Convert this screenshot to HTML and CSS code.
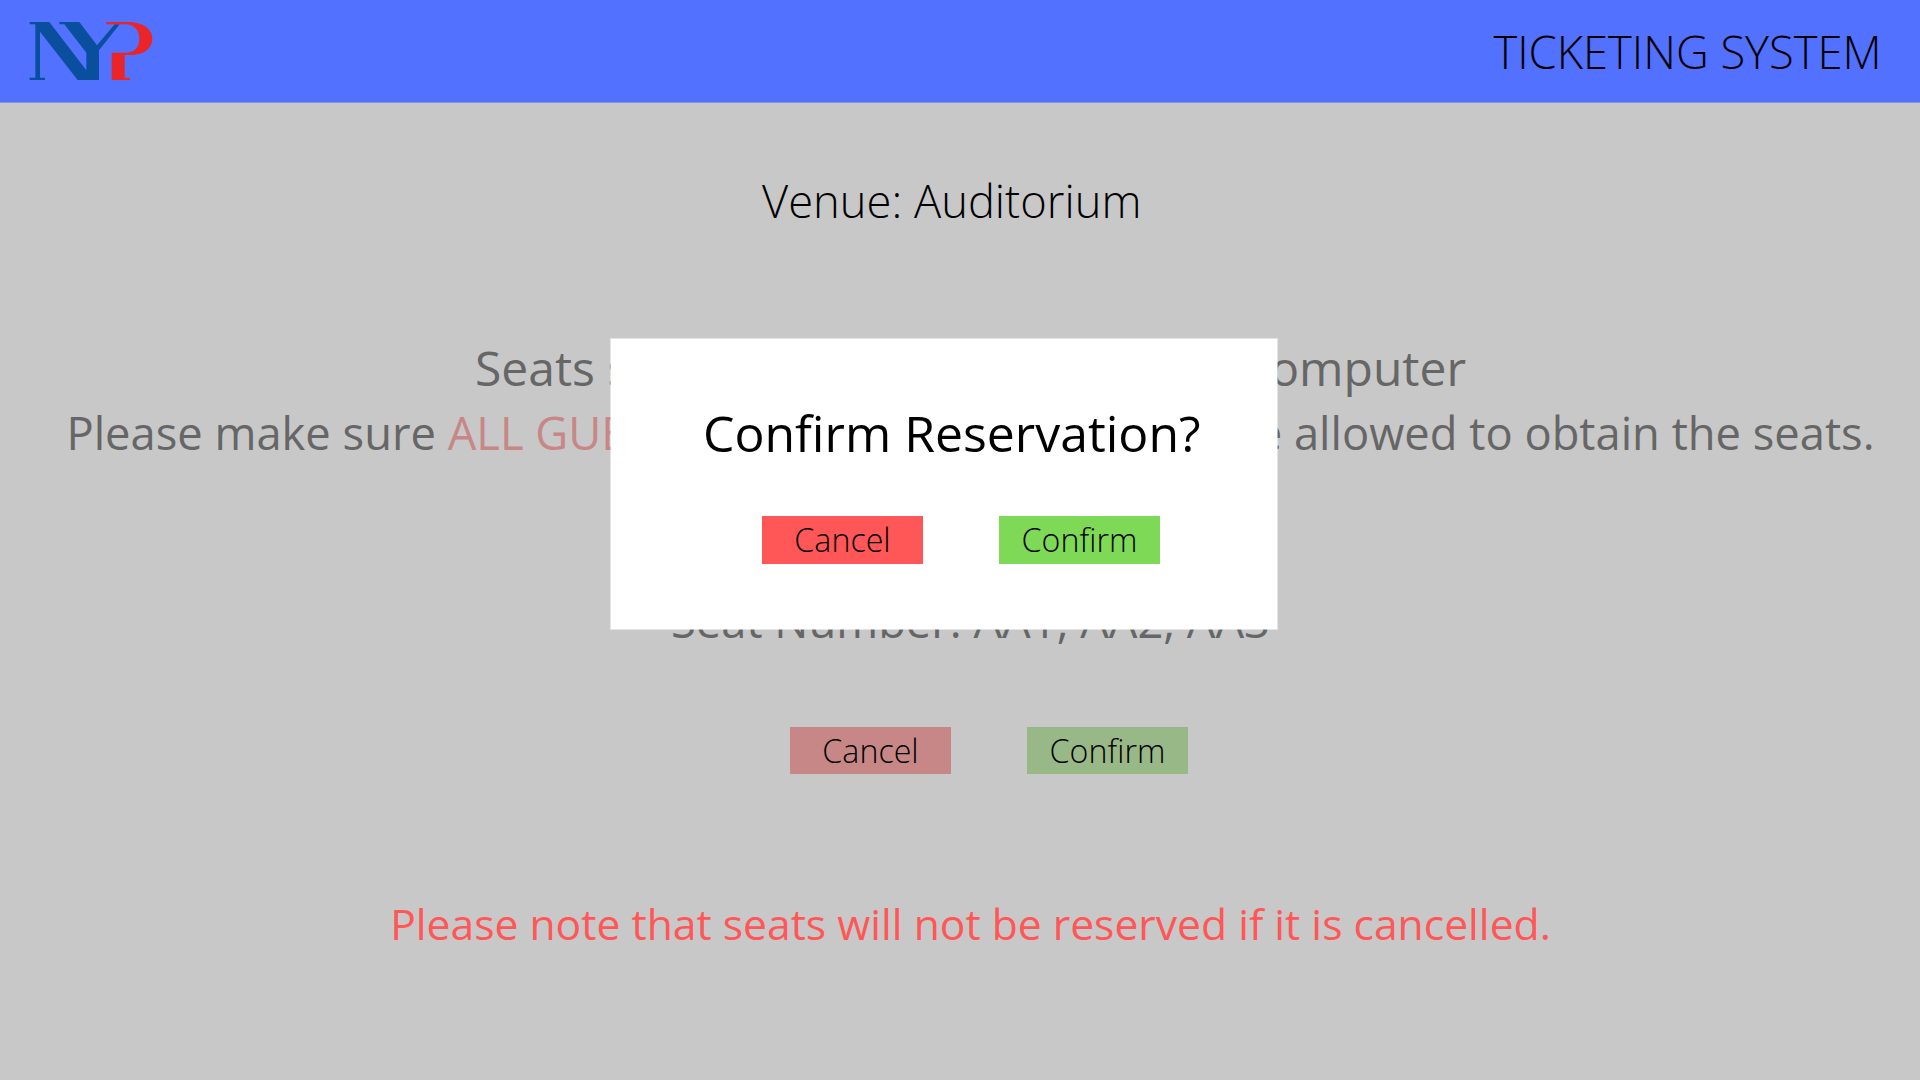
FILE: index.html
```
<!DOCTYPE html>
<html lang="en">
<head>
<meta charset="utf-8">
<title>Ticketing System</title>
<link rel="stylesheet" href="styles.css">
</head>
<body>
<header class="topbar">
  <svg class="logo" viewBox="80 60 381 186" role="img" aria-label="NYP">
    <path class="logo-blue" d="M88 66H147L258 211V158L192 73H178L176 66H237L290 136L343 73H358L296 151V240H232L119 95V233H134V240H88V233H105V73H88Z"/>
    <path class="logo-red" d="M318 66H380C430 66 456 88 456 116C456 147 428 165 390 165H373V233H389V240H334V158H378C405 156 417 140 417 116C417 90 402 74 375 73H318Z"/>
  </svg>
  <h1 class="brand">TICKETING SYSTEM</h1>
</header>
<main class="page">
  <h2 class="venue">Venue: Auditorium</h2>
  <section class="info">
    <p class="line line-seats"><span>Seats s</span><span>computer</span></p>
    <p class="line line-guests"><span>Please make sure <em class="alert">ALL GUE</em></span><span>be allowed to obtain the seats.</span></p>
    <p class="line line-number">Seat Number: AA1, AA2, AA3</p>
  </section>
  <div class="actions actions-dim">
    <button class="btn btn-cancel" type="button">Cancel</button>
    <button class="btn btn-confirm" type="button">Confirm</button>
  </div>
  <p class="note">Please note that seats will not be reserved if it is cancelled.</p>
</main>
<div class="modal" role="dialog" aria-labelledby="modal-title">
  <h2 class="modal-title" id="modal-title">Confirm Reservation?</h2>
  <div class="actions">
    <button class="btn btn-cancel" type="button">Cancel</button>
    <button class="btn btn-confirm" type="button">Confirm</button>
  </div>
</div>
</body>
</html>
```
FILE: styles.css
```
* {
  box-sizing: border-box;
  margin: 0;
  padding: 0;
}

body {
  position: relative;
  width: 1920px;
  height: 1080px;
  overflow: hidden;
  background: #c8c8c8;
  color: #000;
  font-family: "Open Sans", "Noto Sans", sans-serif;
}

.topbar {
  display: flex;
  justify-content: space-between;
  align-items: flex-start;
  height: 103px;
  padding: 20px 38.4px 0 26.7px;
  background: #5271ff;
  border-bottom: 1px solid #8495ea;
}

.logo {
  width: 127px;
  height: 62px;
}

.logo-blue {
  fill: #0a4f9e;
}

.logo-red {
  fill: #e92529;
}

.brand {
  font-size: 45.3px;
  font-weight: 300;
  line-height: 64px;
  white-space: nowrap;
}

.page {
  display: flex;
  flex-direction: column;
  padding-top: 68px;
}

.venue {
  padding-left: 762px;
  font-size: 45.3px;
  font-weight: 300;
  line-height: 60px;
}

.info {
  margin-top: 107px;
  color: #666;
}

.line {
  display: flex;
  justify-content: space-between;
  font-size: 45.3px;
  line-height: 60px;
  white-space: pre;
}

.line-seats {
  padding: 0 454px 0 475px;
  font-size: 48px;
}

.line-guests {
  margin-top: 5px;
  padding: 0 45.4px 0 66.4px;
}

.alert {
  color: #c88787;
  font-style: normal;
}

.line-number {
  justify-content: center;
  margin-top: 128px;
  padding-left: 21px;
}

.actions {
  display: flex;
  gap: 76px;
}

.actions-dim {
  margin-top: 76px;
  padding-left: 790px;
}

.btn {
  width: 161px;
  height: 48px;
  padding-bottom: 2px;
  border: 0;
  color: #000;
  font: 300 32.2px/45px "Open Sans", "Noto Sans", sans-serif;
}

.btn-cancel {
  background: #ff5757;
}

.btn-confirm {
  background: #7ed957;
}

.actions-dim .btn {
  height: 47px;
  padding-bottom: 0;
}

.actions-dim .btn-cancel {
  background: #c88787;
}

.actions-dim .btn-confirm {
  background: #98b887;
}

.note {
  margin-top: 119px;
  padding-left: 21px;
  color: #ff5757;
  font-size: 42.63px;
  line-height: 60px;
  text-align: center;
}

/* Dialog over the reservation page */
.modal {
  position: absolute;
  top: 338px;
  left: 610px;
  width: 668px;
  height: 292px;
  padding-top: 64px;
  background: #fff;
  background-clip: padding-box;
  border: 1px solid rgba(255, 255, 255, 0.5);
}

.modal-title {
  padding-left: 92px;
  font-size: 49.95px;
  font-weight: 400;
  line-height: 60px;
}

.modal .actions {
  margin-top: 53px;
  padding-left: 151px;
}
```
